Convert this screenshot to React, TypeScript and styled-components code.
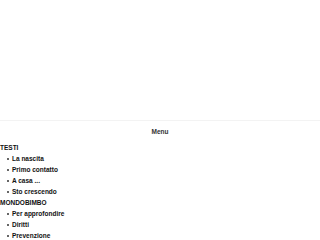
import React from "react";
import styled, { createGlobalStyle } from "styled-components";

const Global = createGlobalStyle`
  html, body { margin: 0; padding: 0; background: #fff; }
  body { font-family: "Liberation Sans", Arial, sans-serif; color: #222; }
`;

const Page = styled.div`
  display: flex;
  flex-direction: column;
`;

const Header = styled.div`
  height: 120px;
  border-bottom: 1px solid #f3f3f3;
`;

const MenuTitle = styled.div`
  text-align: center;
  font-size: 6.5px;
  font-weight: bold;
  color: #333;
  line-height: 8px;
  padding: 7px 0 6px;
`;

const Section = styled.div`
  font-size: 6.5px;
  font-weight: bold;
  line-height: 11px;
  color: #111;
`;

const SectionTitle = styled.div`
  text-transform: uppercase;
`;

const List = styled.ul`
  margin: 0;
  padding-left: 7px;
  list-style: none;
`;

const Item = styled.li`
  display: flex;
  align-items: center;
  line-height: 11px;
  &::before {
    content: "";
    width: 2px;
    height: 2px;
    border-radius: 50%;
    background: #333;
    margin-right: 3px;
    margin-top: 1px;
  }
`;

const sections = [
  { title: "TESTI", items: ["La nascita", "Primo contatto", "A casa ...", "Sto crescendo"] },
  { title: "MONDOBIMBO", items: ["Per approfondire", "Diritti", "Prevenzione"] },
];

export default function App() {
  return (
    <Page>
      <Global />
      <Header />
      <MenuTitle>Menu</MenuTitle>
      {sections.map((s) => (
        <Section key={s.title}>
          <SectionTitle>{s.title}</SectionTitle>
          <List>
            {s.items.map((i) => (
              <Item key={i}>{i}</Item>
            ))}
          </List>
        </Section>
      ))}
    </Page>
  );
}
